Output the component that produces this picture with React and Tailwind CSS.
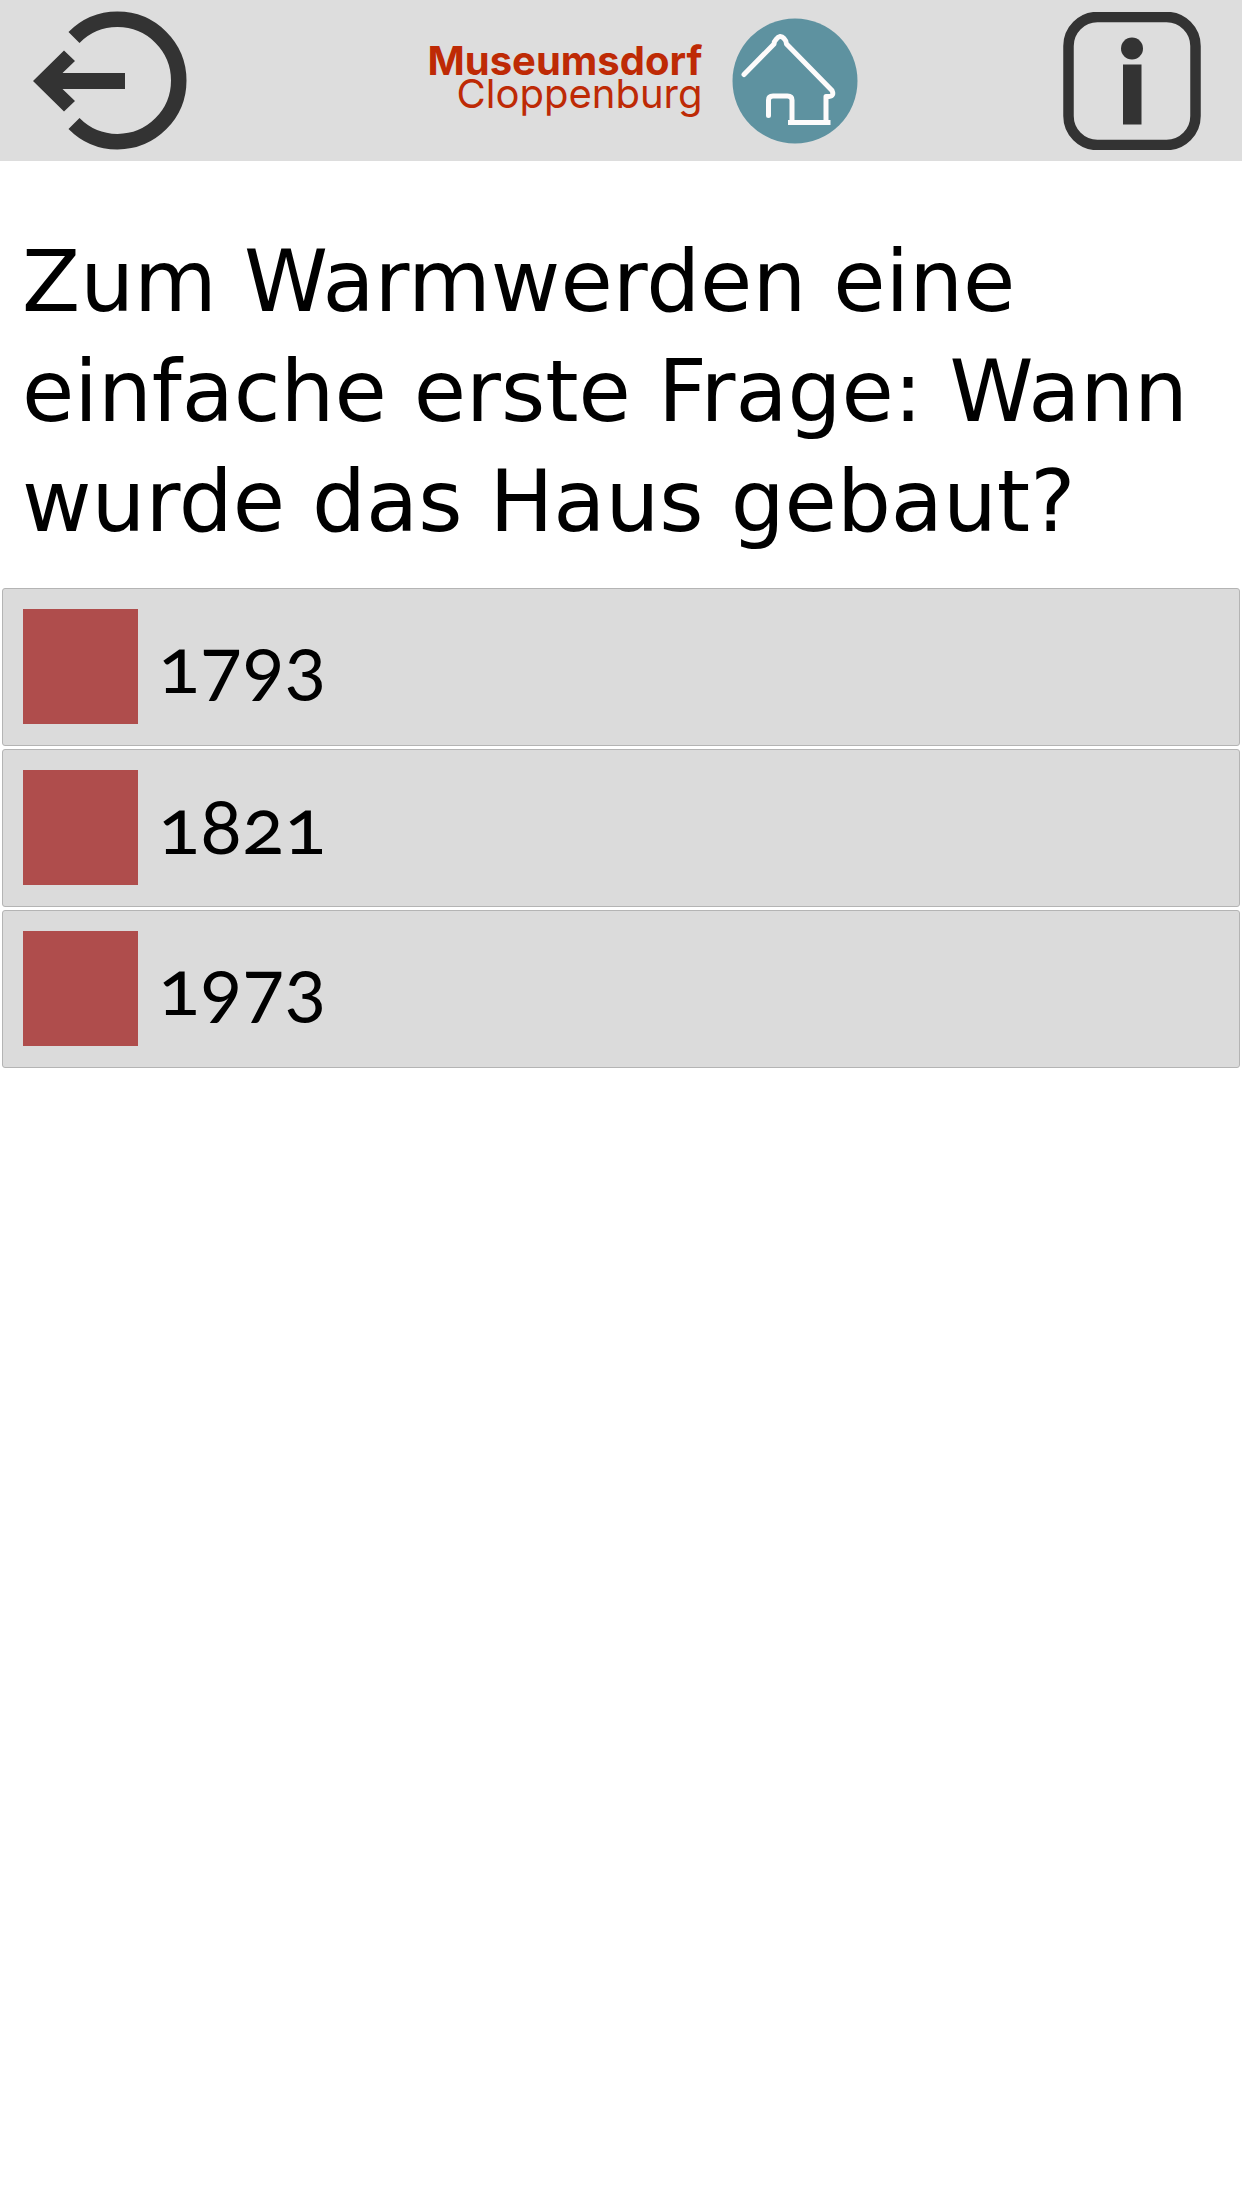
const answers = ["1793", "1821", "1973"];

function ExitIcon() {
  return (
    <svg viewBox="0 0 154 140" className="h-[140px] w-[154px]" aria-hidden="true">
      <path d="M41 26.5 A61.2 61.2 0 1 1 41 112.5" fill="none" stroke="#333" strokeWidth="15.5" />
      <path d="M0 70 L31 39.500 L42 50 L29.500 62 L92 62 L92 78 L29.500 78 L42 90 L31 100.500 Z" fill="#333" />
    </svg>
  );
}

function HouseIcon() {
  return (
    <svg viewBox="0 0 126 126" className="size-[126px] shrink-0" aria-hidden="true">
      <circle cx="63" cy="63" r="62.500" fill="#5e92a0" />
      <g fill="none" stroke="#fdfbfb" strokeWidth="5" strokeLinecap="round" strokeLinejoin="round">
        <path d="M12 56.500 L42 26 Q42 23.500 44 21.500 Q48 16 52 20.500 Q54.500 23 54.500 26 L100 72.500 Q102.500 78 97 78.500 L94 78.500 L94 104.500" />
        <path d="M36.500 97.500 L36.500 82 Q36.500 78 41 78 L55.500 78 Q60 78 60 82 L60 104.500" />
        <path d="M58.500 104.500 H96" strokeLinecap="square" />
      </g>
    </svg>
  );
}

function InfoIcon() {
  return (
    <svg viewBox="0 0 138 138" className="size-[138px]" aria-hidden="true">
      <rect x="5.500" y="5" width="127" height="128" rx="29" fill="none" stroke="#333" strokeWidth="10.500" />
      <circle cx="69" cy="36.500" r="11" fill="#333" />
      <rect x="60" y="52.500" width="18.500" height="60" fill="#333" />
    </svg>
  );
}

export default function App() {
  return (
    <div className="min-h-screen bg-white font-['Lato','Open_Sans',sans-serif] text-black">
      <header className="flex h-[161px] items-center justify-between bg-[#ddd] pl-[33px] pr-[41px]">
        <button type="button" aria-label="Zurück">
          <ExitIcon />
        </button>
        <a href="#start" className="flex items-center gap-[30px] pl-9 text-[#be2a05]">
          <span className="pb-2 text-right font-['Inter',sans-serif] text-[40px] leading-[33px]">
            <span className="block font-bold">Museumsdorf</span>
            <span className="block">Cloppenburg</span>
          </span>
          <HouseIcon />
        </a>
        <button type="button" aria-label="Information">
          <InfoIcon />
        </button>
      </header>
      <main>
        <h1 className="px-[22px] pb-[31px] pt-[66px] font-['DejaVu_Sans',sans-serif] text-[85px] leading-[110px]">
          Zum Warmwerden eine einfache erste Frage: Wann wurde das Haus gebaut?
        </h1>
        <ul className="flex flex-col gap-[3px] px-[2px]">
          {answers.map((answer) => (
            <li key={answer}>
              <button
                type="button"
                className="flex w-full items-center gap-5 rounded-[3px] border border-[#b4b4b4] bg-[#dbdbdb] px-5 pb-[21px] pt-5 text-left text-[78px] leading-[100px] oldstyle-nums"
              >
                <span className="size-[115px] shrink-0 bg-[#af4d4c]" />
                <span className="pb-2">{answer}</span>
              </button>
            </li>
          ))}
        </ul>
      </main>
    </div>
  );
}
